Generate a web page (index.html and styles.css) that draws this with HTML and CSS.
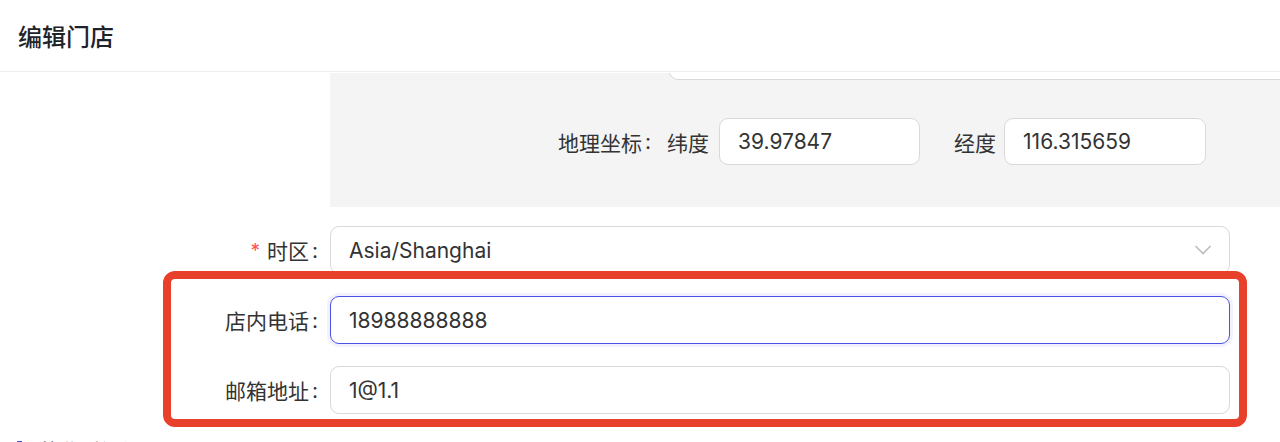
FILE: index.html
```html
<!DOCTYPE html>
<html lang="zh-CN">
<head>
    <meta charset="UTF-8">
    <meta name="viewport" content="width=device-width, initial-scale=1.0">
    <title>编辑门店</title>
    <link rel="stylesheet" href="styles.css">
</head>
<body>
    <div class="page-header">编辑门店</div>

    <div class="store-form">
        <div class="geo-panel">
            <div class="cut-input"></div>
            <div class="geo-row">
                <span class="geo-label">地理坐标<span class="colon">:</span></span>
                <span class="geo-sub">纬度</span>
                <div class="geo-input">39.97847</div>
                <span class="geo-sub geo-sub-lng">经度</span>
                <div class="geo-input geo-input-lng">116.315659</div>
            </div>
        </div>

        <div class="form-row row-timezone">
            <label class="form-label"><span class="required">*</span>时区<span class="colon">:</span></label>
            <div class="form-field form-select">
                <span>Asia/Shanghai</span>
                <svg class="select-arrow" width="18" height="12" viewBox="0 0 18 12">
                    <path d="M1.5 2 L9 9.5 L16.5 2" fill="none" stroke="#bdbdbd" stroke-width="1.6"/>
                </svg>
            </div>
        </div>

        <div class="form-row">
            <label class="form-label">店内电话<span class="colon">:</span></label>
            <div class="form-field is-focused">18988888888</div>
        </div>

        <div class="form-row">
            <label class="form-label">邮箱地址<span class="colon">:</span></label>
            <div class="form-field">1@1.1</div>
        </div>

        <!-- highlight frame drawn over the two contact rows -->
        <div class="highlight-box"></div>

        <div class="section-title">营业时间设置</div>
    </div>
</body>
</html>
```

FILE: styles.css
```css
:root {
    --label-width: 330px;
    --field-width: 900px;
    --field-height: 48px;
    --border-color: #d9d9d9;
    --text-color: #333333;
    --focus-blue: #4a53e6;
    --panel-grey: #f4f4f4;
    --mark-red: #e8412b;
}

body {
    margin: 0;
    font-family: 'Inter', 'Noto Sans CJK SC', sans-serif;
    font-size: 21px;
    color: var(--text-color);
    background-color: #ffffff;
    overflow: hidden;
}

.page-header {
    height: 72px;
    display: flex;
    align-items: center;
    padding-left: 18px;
    font-size: 24px;
    font-weight: 500;
    color: #1f2329;
    border-bottom: 1px solid #eeeeee;
    box-sizing: border-box;
}

.store-form {
    position: relative;
    padding-top: 1px;
}

.geo-panel {
    margin-left: var(--label-width);
    height: 134px;
    background-color: var(--panel-grey);
    overflow: hidden;
}

.cut-input {
    height: var(--field-height);
    margin-top: -43px;
    margin-left: 339px;
    margin-right: -20px;
    background-color: #ffffff;
    border: 1px solid var(--border-color);
    border-radius: 9px;
}

.geo-row {
    display: flex;
    align-items: center;
    margin-top: 38px;
    padding-left: 228px;
}

.geo-label {
    display: flex;
    align-items: center;
}

.geo-sub {
    margin-left: 4px;
}

.geo-sub-lng {
    margin-left: 34px;
}

.geo-input {
    width: 201px;
    height: 47px;
    margin-left: 10px;
    padding: 0 18px;
    display: flex;
    align-items: center;
    background-color: #ffffff;
    border: 1px solid var(--border-color);
    border-radius: 9px;
    box-sizing: border-box;
}

.geo-input-lng {
    margin-left: 8px;
    width: 202px;
}

.form-row {
    display: flex;
    align-items: center;
    margin-top: 22px;
}

.row-timezone {
    margin-top: 19px;
}

.form-label {
    width: var(--label-width);
    display: flex;
    justify-content: flex-end;
    align-items: center;
    box-sizing: border-box;
}

.colon {
    margin: 0 12px 0 3px;
}

.required {
    color: #ff4d4f;
    margin-right: 7px;
    font-size: 19px;
}

.form-field {
    width: var(--field-width);
    height: var(--field-height);
    padding: 0 17px 0 18px;
    display: flex;
    align-items: center;
    justify-content: space-between;
    border: 1px solid var(--border-color);
    border-radius: 9px;
    box-sizing: border-box;
    background-color: #ffffff;
}

.form-field.is-focused {
    border: 1.5px solid var(--focus-blue);
    box-shadow: 0 0 0 3px rgba(74, 83, 230, 0.08);
}

.select-arrow {
    display: block;
}

.highlight-box {
    position: absolute;
    left: 163px;
    top: 199px;
    width: 1084px;
    height: 156px;
    border: 8px solid var(--mark-red);
    border-radius: 12px;
    box-sizing: border-box;
    pointer-events: none;
}

.section-title {
    margin-top: 27px;
    margin-left: 17px;
    padding-left: 16px;
    border-left: 5px solid #3d4be6;
    font-size: 21px;
    line-height: 22px;
    color: #666666;
}
```
